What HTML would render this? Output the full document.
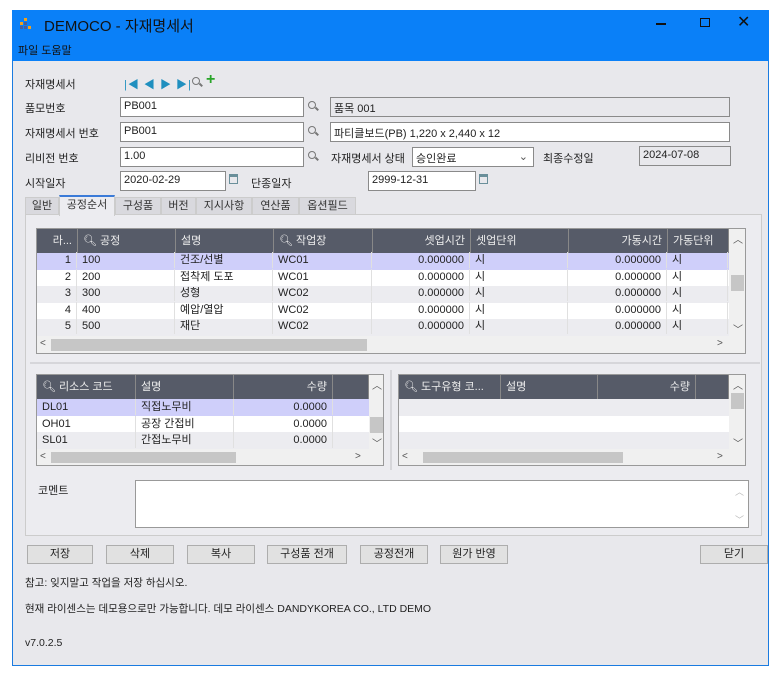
<!DOCTYPE html>
<html><head><meta charset="utf-8"><style>
*{box-sizing:border-box;margin:0;padding:0}
body{width:779px;height:675px;background:#fff;font-family:"Liberation Sans","Noto Sans CJK KR",sans-serif;font-size:11px;color:#222;position:relative;overflow:hidden}
.a{position:absolute}
.win{left:12px;top:10px;width:757px;height:656px;background:#e8e8ec;border:1px solid #1a7be0}
.title{left:12px;top:10px;width:757px;height:51px;background:#0a80f8}
.in{position:absolute;background:#fff;border:1px solid #8a8a8a;height:20px;padding:2px 3px;font-size:11px;white-space:nowrap}
.ro{background:#e8e8ec}
.lbl{position:absolute;font-size:11px}
.mag{position:absolute;width:8px;height:8px;border:1.5px solid #777;border-radius:50%}
.mag:after{content:"";position:absolute;left:6px;top:6px;width:4px;height:1.5px;background:#777;transform:rotate(45deg)}
.grid{position:absolute;background:#fff;border:1px solid #999;overflow:hidden}
.hd{position:absolute;background:#565b68;color:#eee;height:24px;line-height:24px;border-right:1px solid #888;padding:0 5px;white-space:nowrap}
.c{position:absolute;height:16px;line-height:16px;padding:0 5px;border-right:1px solid #e0e0e0;white-space:nowrap}
.r{text-align:right}
.btn{position:absolute;top:545px;height:19px;background:#e1e1e1;border:1px solid #adadad;text-align:center;line-height:17px;font-size:11px}
.tab{position:absolute;top:197px;height:18px;background:#d9d9de;border:1px solid #ccc;text-align:center;line-height:16px;color:#333}
.sb{position:absolute;background:#f0f0f0;color:#555;font-size:10px}
</style></head><body>
<div class="a win"></div>
<div class="a title"></div>
<div class="a" style="left:19px;top:18px;width:14px;height:12px">
<div class="a" style="left:5px;top:0;width:3px;height:3px;background:#f4a21a"></div>
<div class="a" style="left:1px;top:4px;width:3px;height:3px;background:#f4a21a"></div><div class="a" style="left:5px;top:4px;width:3px;height:3px;background:#4a5d9a"></div>
<div class="a" style="left:1px;top:8px;width:3px;height:3px;background:#4a5d9a"></div><div class="a" style="left:5px;top:8px;width:3px;height:3px;background:#4a5d9a"></div><div class="a" style="left:9px;top:8px;width:3px;height:3px;background:#f4a21a"></div></div>
<div class="a" style="left:44px;top:15px;font-size:15px;color:#111">DEMOCO - 자재명세서</div>
<div class="a" style="left:18px;top:42px;font-size:11px;color:#111">파일 도움말</div>
<div class="a" style="left:656px;top:23px;width:10px;height:2px;background:#111"></div>
<div class="a" style="left:700px;top:18px;width:10px;height:9px;border:1.5px solid #111"></div>
<div class="a" style="left:737px;top:12px;font-size:16px;color:#111">✕</div>

<div class="lbl" style="left:25px;top:76px">자재명세서</div>
<div class="a" style="left:124px;top:76px;color:#1f8fbf;font-size:11px;letter-spacing:1px">|◀ ◀ ▶ ▶|</div>
<div class="mag" style="left:192px;top:77px"></div>
<div class="a" style="left:206px;top:71px;color:#2aa52a;font-size:16px;font-weight:bold">+</div>

<div class="lbl" style="left:25px;top:100px">품모번호</div>
<div class="in" style="left:120px;top:97px;width:184px">PB001</div>
<div class="mag" style="left:308px;top:101px"></div>
<div class="in ro" style="left:330px;top:97px;width:400px">품목 001</div>

<div class="lbl" style="left:25px;top:125px">자재명세서 번호</div>
<div class="in" style="left:120px;top:122px;width:184px">PB001</div>
<div class="mag" style="left:308px;top:126px"></div>
<div class="in" style="left:330px;top:122px;width:400px">파티클보드(PB) 1,220 x 2,440 x 12</div>

<div class="lbl" style="left:25px;top:150px">리비전 번호</div>
<div class="in" style="left:120px;top:147px;width:184px">1.00</div>
<div class="mag" style="left:308px;top:151px"></div>
<div class="lbl" style="left:331px;top:150px">자재명세서 상태</div>
<div class="in" style="left:412px;top:147px;width:122px">승인완료<span style="position:absolute;right:5px;top:2px;color:#555">⌄</span></div>
<div class="lbl" style="left:543px;top:150px">최종수정일</div>
<div class="in ro" style="left:639px;top:146px;width:92px">2024-07-08</div>

<div class="lbl" style="left:25px;top:175px">시작일자</div>
<div class="in" style="left:120px;top:171px;width:106px">2020-02-29</div>
<div class="a" style="left:229px;top:174px;width:9px;height:10px;border:1.5px solid #6a8f9a;border-top-width:3px"></div>
<div class="lbl" style="left:251px;top:175px">단종일자</div>
<div class="in" style="left:368px;top:171px;width:108px">2999-12-31</div>
<div class="a" style="left:479px;top:174px;width:9px;height:10px;border:1.5px solid #6a8f9a;border-top-width:3px"></div>

<div class="a" style="left:25px;top:214px;width:737px;height:322px;border:1px solid #ccc;background:#ececf0"></div>
<div class="tab" style="left:25px;width:34px">일반</div>
<div class="tab" style="left:59px;top:195px;height:21px;width:56px;background:#ececf0;border-bottom:none;border-top:2px solid #3b7bd8">공정순서</div>
<div class="tab" style="left:115px;width:46px">구성품</div>
<div class="tab" style="left:161px;width:35px">버전</div>
<div class="tab" style="left:196px;width:56px">지시사항</div>
<div class="tab" style="left:252px;width:47px">연산품</div>
<div class="tab" style="left:299px;width:57px">옵션필드</div>

<!-- top grid -->
<div class="grid" style="left:36px;top:228px;width:710px;height:126px">
<div class="hd r" style="left:0;top:0;width:41px">라...</div>
<div class="hd" style="left:41px;top:0;width:98px">🔍︎ 공정</div>
<div class="hd" style="left:139px;top:0;width:98px">설명</div>
<div class="hd" style="left:237px;top:0;width:99px">🔍︎ 작업장</div>
<div class="hd r" style="left:336px;top:0;width:98px">셋업시간</div>
<div class="hd" style="left:434px;top:0;width:98px">셋업단위</div>
<div class="hd r" style="left:532px;top:0;width:99px">가동시간</div>
<div class="hd" style="left:631px;top:0;width:61px">가동단위</div>
<div class="a" style="left:0;top:24px;width:692px;height:16.6px;background:#cfcffa"></div>
<div class="a" style="left:0;top:57px;width:692px;height:16.6px;background:#ececf0"></div>
<div class="a" style="left:0;top:90px;width:692px;height:16.6px;background:#ececf0"></div>
<div id="rows"></div>
<div class="sb" style="left:692px;top:0;width:17px;height:107px"><span class="a" style="left:4px;top:2px">︿</span><div class="a" style="left:2px;top:46px;width:13px;height:16px;background:#c6c6c6"></div><span class="a" style="left:4px;top:92px">﹀</span></div>
<div class="sb" style="left:0;top:107px;width:709px;height:18px"><span class="a" style="left:3px;top:2px">&lt;</span><div class="a" style="left:14px;top:3px;width:316px;height:12px;background:#c6c6c6"></div><span class="a" style="left:680px;top:2px">&gt;</span></div>
</div>

<!-- lower left -->
<div class="a" style="left:30px;top:362px;width:730px;height:2px;background:#d6d6da"></div>
<div class="grid" style="left:36px;top:374px;width:348px;height:92px">
<div class="hd" style="left:0;top:0;width:99px">🔍︎ 리소스 코드</div>
<div class="hd" style="left:99px;top:0;width:98px">설명</div>
<div class="hd r" style="left:197px;top:0;width:99px">수량</div>
<div class="hd" style="left:296px;top:0;width:36px"></div>
<div class="a" style="left:0;top:24px;width:332px;height:16.5px;background:#cfcffa"></div>
<div class="a" style="left:0;top:57px;width:332px;height:16.5px;background:#ececf0"></div>
<div class="c" style="left:0;top:24px;width:99px">DL01</div><div class="c" style="left:99px;top:24px;width:98px">직접노무비</div><div class="c r" style="left:197px;top:24px;width:99px">0.0000</div>
<div class="c" style="left:0;top:41px;width:99px">OH01</div><div class="c" style="left:99px;top:41px;width:98px">공장 간접비</div><div class="c r" style="left:197px;top:41px;width:99px">0.0000</div>
<div class="c" style="left:0;top:57px;width:99px">SL01</div><div class="c" style="left:99px;top:57px;width:98px">간접노무비</div><div class="c r" style="left:197px;top:57px;width:99px">0.0000</div>
<div class="sb" style="left:332px;top:0;width:15px;height:74px"><span class="a" style="left:3px;top:2px">︿</span><div class="a" style="left:1px;top:42px;width:13px;height:16px;background:#c6c6c6"></div><span class="a" style="left:3px;top:60px">﹀</span></div>
<div class="sb" style="left:0;top:74px;width:347px;height:17px"><span class="a" style="left:3px;top:2px">&lt;</span><div class="a" style="left:14px;top:3px;width:185px;height:11px;background:#c6c6c6"></div><span class="a" style="left:318px;top:2px">&gt;</span></div>
</div>
<div class="a" style="left:390px;top:370px;width:2px;height:100px;background:#d6d6da"></div>
<!-- lower right -->
<div class="grid" style="left:398px;top:374px;width:348px;height:92px">
<div class="hd" style="left:0;top:0;width:102px">🔍︎ 도구유형 코...</div>
<div class="hd" style="left:102px;top:0;width:97px">설명</div>
<div class="hd r" style="left:199px;top:0;width:98px">수량</div>
<div class="hd" style="left:297px;top:0;width:33px"></div>
<div class="a" style="left:0;top:24px;width:330px;height:16.5px;background:#ececf0"></div>
<div class="a" style="left:0;top:57px;width:330px;height:16.5px;background:#ececf0"></div>
<div class="sb" style="left:330px;top:0;width:17px;height:74px"><span class="a" style="left:4px;top:2px">︿</span><div class="a" style="left:2px;top:18px;width:13px;height:16px;background:#c6c6c6"></div><span class="a" style="left:4px;top:60px">﹀</span></div>
<div class="sb" style="left:0;top:74px;width:347px;height:17px"><span class="a" style="left:3px;top:2px">&lt;</span><div class="a" style="left:24px;top:3px;width:200px;height:11px;background:#c6c6c6"></div><span class="a" style="left:318px;top:2px">&gt;</span></div>
</div>

<div class="lbl" style="left:38px;top:482px">코멘트</div>
<div class="a" style="left:135px;top:480px;width:614px;height:48px;background:#fff;border:1px solid #999"><span class="a" style="right:4px;top:4px;color:#bbb;font-size:9px">︿</span><span class="a" style="right:4px;top:32px;color:#bbb;font-size:9px">﹀</span></div>

<div class="btn" style="left:27px;width:66px">저장</div>
<div class="btn" style="left:106px;width:68px">삭제</div>
<div class="btn" style="left:187px;width:68px">복사</div>
<div class="btn" style="left:267px;width:80px">구성품 전개</div>
<div class="btn" style="left:360px;width:68px">공정전개</div>
<div class="btn" style="left:440px;width:68px">원가 반영</div>
<div class="btn" style="left:700px;width:68px">닫기</div>

<div class="lbl" style="left:25px;top:575px;font-size:10.5px">참고: 잊지말고 작업을 저장 하십시오.</div>
<div class="lbl" style="left:25px;top:601px;font-size:10.5px">현재 라이센스는 데모용으로만 가능합니다. 데모 라이센스 DANDYKOREA CO., LTD DEMO</div>
<div class="lbl" style="left:25px;top:637px;font-size:10.5px">v7.0.2.5</div>

<div class="a" style="left:36px;top:252px;width:692px">
<div class="c r" style="left:0;top:0;width:41px">1</div><div class="c" style="left:41px;top:0;width:98px">100</div><div class="c" style="left:139px;top:0;width:98px">건조/선별</div><div class="c" style="left:237px;top:0;width:99px">WC01</div><div class="c r" style="left:336px;top:0;width:98px">0.000000</div><div class="c" style="left:434px;top:0;width:98px">시</div><div class="c r" style="left:532px;top:0;width:99px">0.000000</div><div class="c" style="left:631px;top:0;width:61px">시</div>
<div class="c r" style="left:0;top:16.5px;width:41px">2</div><div class="c" style="left:41px;top:16.5px;width:98px">200</div><div class="c" style="left:139px;top:16.5px;width:98px">접착제 도포</div><div class="c" style="left:237px;top:16.5px;width:99px">WC01</div><div class="c r" style="left:336px;top:16.5px;width:98px">0.000000</div><div class="c" style="left:434px;top:16.5px;width:98px">시</div><div class="c r" style="left:532px;top:16.5px;width:99px">0.000000</div><div class="c" style="left:631px;top:16.5px;width:61px">시</div>
<div class="c r" style="left:0;top:33px;width:41px">3</div><div class="c" style="left:41px;top:33px;width:98px">300</div><div class="c" style="left:139px;top:33px;width:98px">성형</div><div class="c" style="left:237px;top:33px;width:99px">WC02</div><div class="c r" style="left:336px;top:33px;width:98px">0.000000</div><div class="c" style="left:434px;top:33px;width:98px">시</div><div class="c r" style="left:532px;top:33px;width:99px">0.000000</div><div class="c" style="left:631px;top:33px;width:61px">시</div>
<div class="c r" style="left:0;top:49.5px;width:41px">4</div><div class="c" style="left:41px;top:49.5px;width:98px">400</div><div class="c" style="left:139px;top:49.5px;width:98px">예압/열압</div><div class="c" style="left:237px;top:49.5px;width:99px">WC02</div><div class="c r" style="left:336px;top:49.5px;width:98px">0.000000</div><div class="c" style="left:434px;top:49.5px;width:98px">시</div><div class="c r" style="left:532px;top:49.5px;width:99px">0.000000</div><div class="c" style="left:631px;top:49.5px;width:61px">시</div>
<div class="c r" style="left:0;top:66px;width:41px">5</div><div class="c" style="left:41px;top:66px;width:98px">500</div><div class="c" style="left:139px;top:66px;width:98px">재단</div><div class="c" style="left:237px;top:66px;width:99px">WC02</div><div class="c r" style="left:336px;top:66px;width:98px">0.000000</div><div class="c" style="left:434px;top:66px;width:98px">시</div><div class="c r" style="left:532px;top:66px;width:99px">0.000000</div><div class="c" style="left:631px;top:66px;width:61px">시</div>
</div>
</body></html>
